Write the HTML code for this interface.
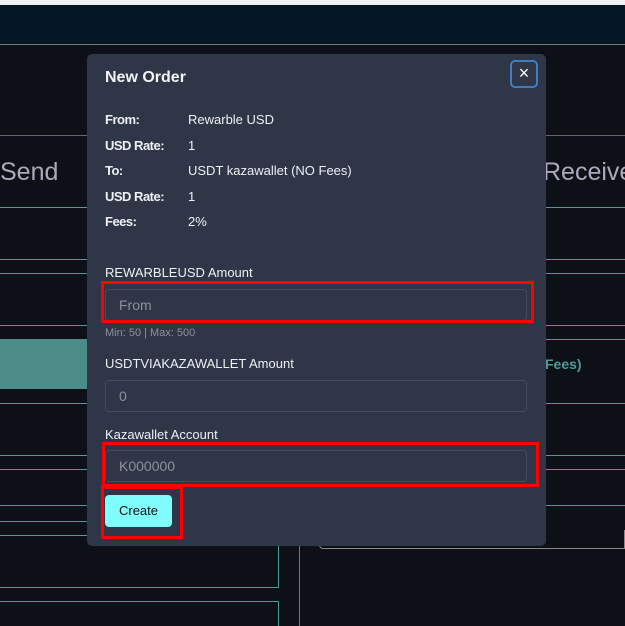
<!DOCTYPE html>
<html><head><style>
*{margin:0;padding:0;box-sizing:border-box}
body{width:625px;height:626px;overflow:hidden;background:#0d1017;font-family:"Liberation Sans",sans-serif;position:relative;color:#e8ebf0}
.a{position:absolute}
.hl{position:absolute;height:1px;background:#4f9a99}
.m{position:absolute;left:87px;top:54px;width:459px;height:492px;background:#2f3647;border-radius:5px}
.lab{position:absolute;left:18px;font-size:13px;font-weight:bold;letter-spacing:-0.5px;color:#eef0f4}
.val{position:absolute;left:101px;font-size:13px;color:#eef0f4}
.inp{position:absolute;left:18px;width:422px;height:32px;border:1px solid #434b5c;border-radius:4px;background:#2f3647;font-size:14px;color:#8b93a1;padding:7px 13px}
.red{position:absolute;border:3px solid #f00}
.fl{position:absolute;left:18px;font-size:13px;color:#eef0f4}
</style></head><body>
<div class="a" style="left:0;top:0;width:625px;height:5px;background:#f1f1f1"></div>
<div class="a" style="left:0;top:5px;width:625px;height:39px;background:#041523"></div>
<div class="a" style="left:0;top:44px;width:625px;height:1px;background:#777"></div>
<div class="a" style="left:0;top:135px;width:625px;height:1px;background:#666"></div>
<div class="a" style="left:0;top:158px;font-size:25px;color:#aab;">Send</div>
<div class="a" style="left:543px;top:158px;font-size:25px;color:#aab;">Receive</div>
<div class="a" style="left:545px;top:356px;font-size:14px;color:#4f9a99;font-weight:bold">Fees)</div>
<div class="hl" style="left:0;top:207px;width:625px"></div>
<div class="hl" style="left:0;top:259px;width:625px"></div>
<div class="hl" style="left:0;top:273px;width:625px"></div>
<div class="hl" style="left:0;top:325px;width:625px"></div>
<div class="hl" style="left:0;top:339px;width:625px"></div>
<div class="a" style="left:0;top:339px;width:90px;height:50px;background:#4b8b88"></div>
<div class="hl" style="left:0;top:403px;width:625px"></div>
<div class="hl" style="left:0;top:455px;width:625px"></div>
<div class="hl" style="left:0;top:469px;width:625px"></div>
<div class="hl" style="left:0;top:505px;width:625px"></div>
<div class="hl" style="left:0;top:521px;width:90px"></div>
<div class="hl" style="left:0;top:535px;width:90px"></div>
<div class="hl" style="left:0;top:587px;width:279px"></div>
<div class="hl" style="left:0;top:601px;width:279px"></div>
<div class="a" style="left:278px;top:540px;width:1px;height:47px;background:#4f9a99"></div>
<div class="a" style="left:278px;top:601px;width:1px;height:25px;background:#4f9a99"></div>
<div class="a" style="left:299px;top:540px;width:1px;height:86px;background:#777"></div>
<div class="a" style="left:319px;top:530px;width:306px;height:19px;border:1px solid #888;border-top:none;border-radius:0 0 0 4px"></div>
<div class="m">
<div class="a" style="left:18px;top:15px;font-size:16px;font-weight:bold;color:#f2f4f7">New Order</div>
<div class="a" style="left:423px;top:6px;width:28px;height:28px;border:2px solid #3f7fbf;border-radius:5px;color:#fff;font-size:18px;text-align:center;line-height:23px">×</div>
<div class="lab" style="top:58px">From:</div><div class="val" style="top:58px">Rewarble USD</div>
<div class="lab" style="top:84px">USD Rate:</div><div class="val" style="top:84px">1</div>
<div class="lab" style="top:109px">To:</div><div class="val" style="top:109px">USDT kazawallet (NO Fees)</div>
<div class="lab" style="top:135px">USD Rate:</div><div class="val" style="top:135px">1</div>
<div class="lab" style="top:160px">Fees:</div><div class="val" style="top:160px">2%</div>
<div class="fl" style="top:211px">REWARBLEUSD Amount</div>
<div class="inp" style="top:235px">From</div>
<div class="red" style="left:14px;top:227px;width:433px;height:42px"></div>
<div class="a" style="left:18px;top:273px;font-size:11px;color:#8b93a1">Min: 50 | Max: 500</div>
<div class="fl" style="top:302px">USDTVIAKAZAWALLET Amount</div>
<div class="inp" style="top:326px">0</div>
<div class="fl" style="top:373px">Kazawallet Account</div>
<div class="inp" style="top:396px">K000000</div>
<div class="red" style="left:15px;top:388px;width:437px;height:45px"></div>
<div class="a" style="left:18px;top:441px;width:67px;height:32px;background:#7ffcfc;border-radius:4px;color:#111;font-size:13px;text-align:center;line-height:32px">Create</div>
<div class="red" style="left:14px;top:432px;width:82px;height:53px"></div>
</div>
</body></html>
